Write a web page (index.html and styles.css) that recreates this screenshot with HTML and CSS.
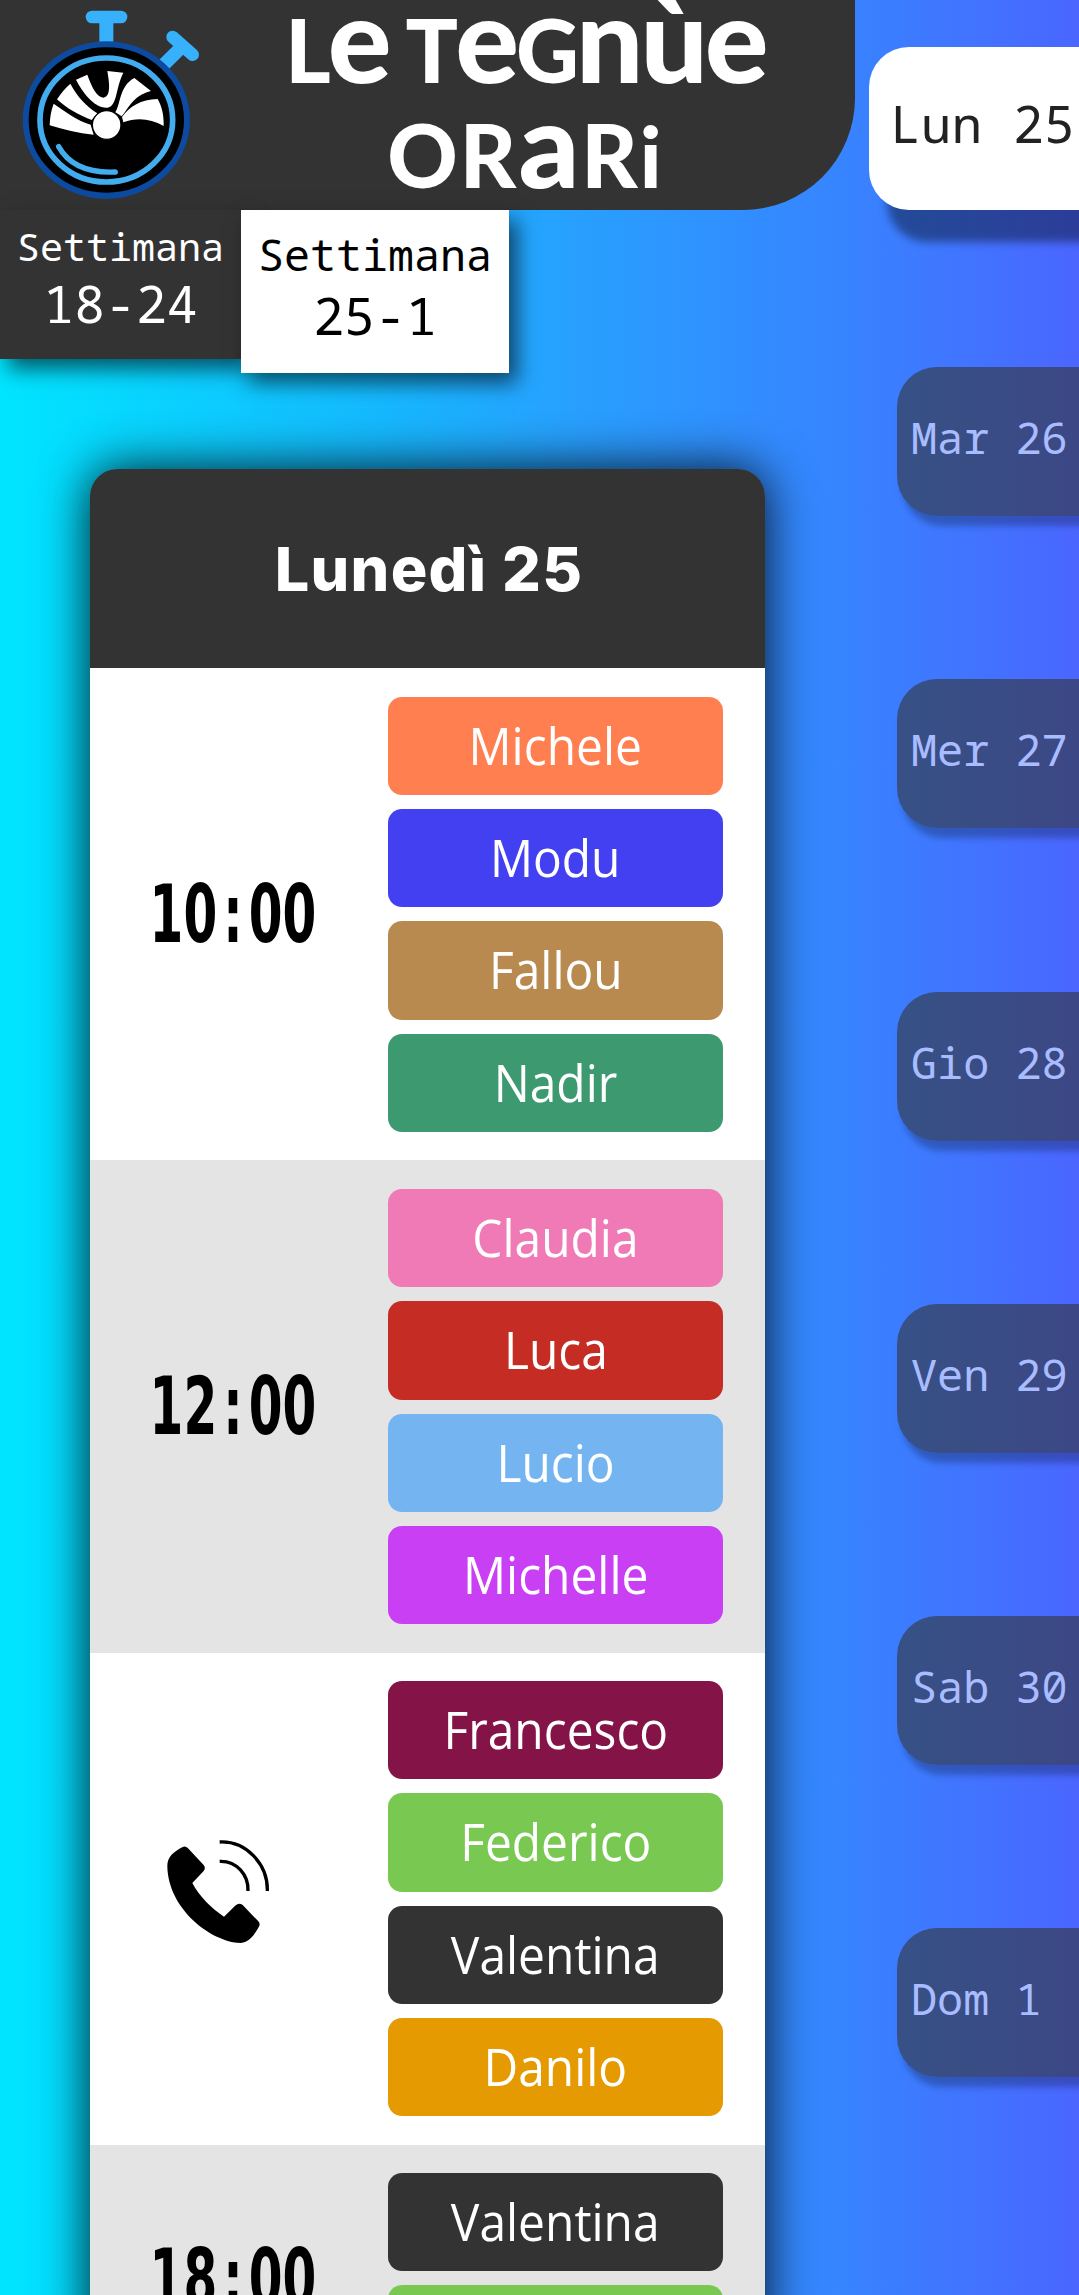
FILE: index.html
```html
<!DOCTYPE html>
<html lang="it">
<head>
<meta charset="utf-8">
<title>Le Tegnùe Orari</title>
<link rel="stylesheet" href="styles.css">
</head>
<body>
<div class="page">
  <div class="main">
    <header class="header">
      <svg class="logo" viewBox="0 0 720 630">
        <g stroke="#38b1fc" stroke-linecap="round" fill="none">
          <path d="M319 60V140" stroke-width="42" stroke-linecap="butt"/>
          <path d="M276 51H363" stroke-width="38"/>
          <path d="M548 138L485 200" stroke-width="40" stroke-linecap="butt"/>
          <path d="M518 111L578 164" stroke-width="38"/>
        </g>
        <ellipse cx="319" cy="360" rx="242" ry="227" fill="#000" stroke="#0d4ba0" stroke-width="18"/>
        <ellipse cx="319" cy="360" rx="199" ry="186" fill="none" stroke="#43acee" stroke-width="17"/>
        <path d="M176 440C205 492 260 520 346 516" fill="none" stroke="#43acee" stroke-width="16" stroke-linecap="round"/>
        <g fill="#fff">
          <path d="M161 311C195 335 232 362 272 374L281 404C235 400 190 389 149 376C150 351 153 332 161 311Z"/>
          <path d="M171 298C182 281 196 264 211 251C232 291 260 320 292 340L275 360C235 345 200 325 171 298Z"/>
          <path d="M228 239L262 224C273 256 290 292 310 293C334 290 328 248 322 213L370 218C346 265 353 318 322 323C284 326 247 276 228 239Z"/>
          <path d="M403 234L453 273C396 288 386 326 365 349L346 337C363 309 358 258 403 234Z"/>
          <path d="M370 367L366 351C389 320 422 298 473 297C486 320 492 348 491 378C451 355 410 352 370 367Z"/>
          <circle cx="320" cy="375" r="43" stroke="#000" stroke-width="4"/>
        </g>
      </svg>
      <h1 class="title">
        <span class="line line-name">L<span class="x">e</span> T<span class="x">e</span>G<span class="x">nùe</span></span>
        <span class="line line-kind">OR<span class="x">a</span>R<span class="i">i</span></span>
      </h1>
    </header>
    <nav class="weeks">
      <a class="week"><span class="week-label">Settimana</span><span class="week-range">18-24</span></a>
      <a class="week week-active"><span class="week-label">Settimana</span><span class="week-range">25-1</span></a>
    </nav>
    <section class="card">
      <h2 class="card-title">Lunedì 25</h2>
      <div class="slot">
        <div class="time"><span class="digits">10<span class="colon">:</span>00</span></div>
        <div class="names">
          <div class="name coral"><span>Michele</span></div>
          <div class="name blue"><span>Modu</span></div>
          <div class="name tan"><span>Fallou</span></div>
          <div class="name sea"><span>Nadir</span></div>
        </div>
      </div>
      <div class="slot alt">
        <div class="time"><span class="digits">12<span class="colon">:</span>00</span></div>
        <div class="names">
          <div class="name pink"><span>Claudia</span></div>
          <div class="name red"><span>Luca</span></div>
          <div class="name sky"><span>Lucio</span></div>
          <div class="name violet"><span>Michelle</span></div>
        </div>
      </div>
      <div class="slot">
        <svg class="phone" viewBox="0 0 600 540">
          <path d="M142 200C141 171 160 156 188 141Q197 137 204 145L251 195Q258 204 251 213L217 249C238 289 274 325 312 350L347 316Q357 307 368 315L415 364Q423 372 415 383C405 400 390 427 362 429C270 425 145 325 142 200Z"/>
          <g fill="none" stroke="#000" stroke-width="10"><path d="M299 184C350 182 386 225 384 273"/><path d="M299 126C376 122 444 190 442 273"/></g>
        </svg>
        <div class="names">
          <div class="name wine"><span>Francesco</span></div>
          <div class="name green"><span>Federico</span></div>
          <div class="name dark"><span>Valentina</span></div>
          <div class="name amber"><span>Danilo</span></div>
        </div>
      </div>
      <div class="slot alt">
        <div class="time"><span class="digits">18<span class="colon">:</span>00</span></div>
        <div class="names">
          <div class="name dark"><span>Valentina</span></div>
          <div class="name green"></div>
        </div>
      </div>
    </section>
  </div>
  <nav class="days">
    <a class="day day-active">Lun 25</a>
    <a class="day">Mar 26</a>
    <a class="day">Mer 27</a>
    <a class="day">Gio 28</a>
    <a class="day">Ven 29</a>
    <a class="day">Sab 30</a>
    <a class="day">Dom 1</a>
  </nav>
</div>
</body>
</html>
```
FILE: styles.css
```css
* { box-sizing: border-box; }
body { margin: 0; }
.page {
  display: flex;
  justify-content: space-between;
  width: 1079px;
  height: 2295px;
  overflow: hidden;
  background: linear-gradient(90deg, #00e5ff 0%, #16b8ff 36%, #28a0ff 53%, #3685ff 77%, #4a66ff 100%);
}
.main { width: 855px; }
.header {
  display: flex;
  height: 210px;
  background: #333;
  border-bottom-right-radius: 112px;
}
.logo { width: 240px; height: 210px; flex: none; }
.title {
  flex: 1;
  margin: -3px 44px 0 0;
  color: #fff;
  font: 900 87px/105px Lato, sans-serif;
  text-align: center;
  white-space: nowrap;
}
.line { display: block; height: 105px; }
.line-name { letter-spacing: -3px; word-spacing: 2px; }
.line-kind { letter-spacing: 2px; }
.title .x { font-size: 119px; line-height: 0; }
.title .i { font-size: 84px; line-height: 0; }
.weeks { display: flex; align-items: flex-start; height: 259px; }
.week {
  display: flex;
  flex-direction: column;
  align-items: center;
  width: 241px;
  height: 149px;
  padding-top: 9px;
  background: #333;
  color: #fff;
  font-family: "Droid Sans Mono", "Noto Sans Mono", "DejaVu Sans Mono", monospace;
  font-weight: 450;
  box-shadow: 8px 10px 20px rgba(0, 0, 0, .6);
}
.week-label { font-size: 38.4px; line-height: 54px; }
.week-range { font-size: 51.5px; line-height: 60px; }
.week-active { width: 268px; height: 163px; background: #fff; color: #000; padding-top: 14px; }
.week-active .week-label { font-size: 43.3px; line-height: 61px; }
.card {
  width: 675px;
  margin-left: 90px;
  border-radius: 27px 27px 0 0;
  box-shadow: 0 0 50px rgba(0, 0, 0, .9);
}
.card-title {
  margin: 0;
  padding-left: 3px;
  height: 199.3px;
  background: #333;
  color: #fff;
  border-radius: 27px 27px 0 0;
  font: 800 61px/201px Inter, sans-serif;
  letter-spacing: 1.3px;
  text-align: center;
}
.slot {
  display: flex;
  align-items: center;
  justify-content: space-between;
  padding: 28.3px 42px 28.3px 0;
  background: #fff;
}
.alt { background: #e4e4e4; }
.time { display: flex; justify-content: center; width: 286px; }
.digits {
  font: 700 81px/93px "DejaVu Sans", sans-serif;
  transform: scaleX(.6);
}
.colon { padding: 0 10px; }
.phone { width: 200px; height: 180px; margin: 0 0 17px 30px; }
.names { display: flex; flex-direction: column; gap: 14px; width: 335px; }
.name {
  display: flex;
  justify-content: center;
  height: 98.4px;
  border-radius: 14px;
  color: #fff;
  font: 400 51.5px/97px "Open Sans", sans-serif;
}
.name span { transform: scaleX(.93); }
.coral { background: #ff7f50; }
.blue { background: #4240f0; }
.tan { background: #b88a50; }
.sea { background: #3d9970; }
.pink { background: #f07ab5; }
.red { background: #c52d24; }
.sky { background: #74b5f1; }
.violet { background: #c940f4; }
.wine { background: #841447; }
.green { background: #79c852; }
.dark { background: #333; }
.amber { background: #e49a00; }
.days {
  display: flex;
  flex-direction: column;
  align-items: flex-end;
  gap: 163.2px;
  width: 224px;
  padding-top: 47px;
}
.day {
  flex: none;
  width: 182px;
  height: 149px;
  padding-left: 14px;
  border-radius: 40px 0 0 40px;
  background: rgba(51, 51, 51, .6);
  color: #a9bcff;
  font: 450 43.5px/141px "Droid Sans Mono", "Noto Sans Mono", "DejaVu Sans Mono", monospace;
  white-space: pre;
  box-shadow: 5px 10px 6px rgba(0, 0, 0, .25);
}
.day-active {
  width: 210px;
  height: 163px;
  margin-bottom: -6px;
  padding-left: 21px;
  background: #fff;
  color: #222;
  font-size: 51.3px;
  line-height: 152px;
  box-shadow: 18px 32px 8px rgba(0, 0, 0, .4);
}
```
